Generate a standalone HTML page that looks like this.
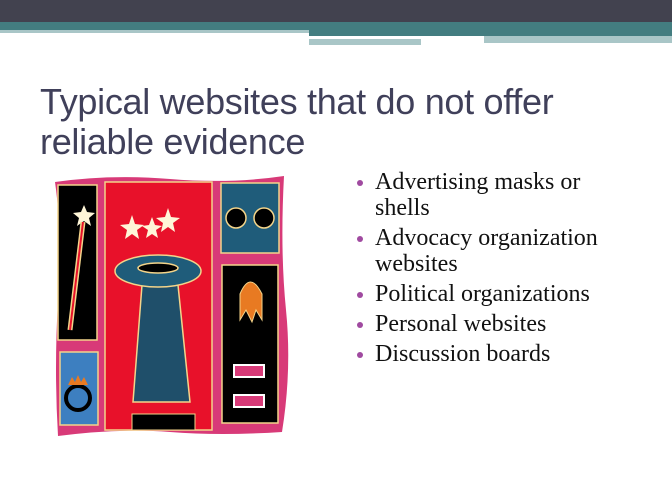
<!DOCTYPE html>
<html><head><meta charset="utf-8"><style>
body{margin:0;width:672px;height:504px;overflow:hidden;background:#fff;position:relative;font-family:"Liberation Sans",sans-serif}
.a{position:absolute}
h1{position:absolute;left:40px;top:82px;margin:0;font-weight:normal;font-size:36px;line-height:40px;color:#40405a;letter-spacing:-0.3px;white-space:nowrap}
ul{position:absolute;left:352px;top:169px;margin:0;padding:0;list-style:none;font-family:"Liberation Serif",serif;font-size:24px;line-height:26px;color:#111;width:252px}
li{position:relative;padding-left:23px;margin-bottom:4px}
li:before{content:"";position:absolute;left:5px;top:11px;width:6px;height:6px;border-radius:50%;background:#a04aa0}
</style></head><body>
<div class="a" style="left:0;top:0;width:672px;height:22px;background:#42424f"></div>
<div class="a" style="left:0;top:22px;width:672px;height:11px;background:#437d80"></div>
<div class="a" style="left:0;top:30px;width:309px;height:3px;background:#a9c6c7"></div>
<div class="a" style="left:309px;top:33px;width:363px;height:3px;background:#437d80"></div>
<div class="a" style="left:309px;top:36px;width:175px;height:2px;background:#fff"></div>
<div class="a" style="left:484px;top:36px;width:188px;height:7px;background:#a9c6c7"></div>
<div class="a" style="left:309px;top:39px;width:112px;height:6px;background:#a9c6c7"></div>
<h1>Typical websites that do not offer<br>reliable evidence</h1>
<svg class="a" style="left:50px;top:170px" width="240" height="270" viewBox="0 0 240 270">
<path d="M5 12 Q60 4 120 9 T234 6 Q230 80 236 140 T232 262 Q170 266 120 262 T8 266 Q4 200 8 130 T5 12Z" fill="#d83a78"/>
<g stroke="#f3d48a" stroke-width="1.5">
<rect x="8" y="15" width="39" height="155" fill="#000"/>
<rect x="55" y="12" width="107" height="248" fill="#e8112a"/>
<rect x="171" y="13" width="58" height="70" fill="#1f5c7a"/>
<rect x="172" y="95" width="56" height="158" fill="#000"/>
<rect x="10" y="182" width="38" height="73" fill="#3d7fc0"/>
</g>
<polygon points="34,35 37,42 45,43 39,48 41,56 34,51 27,56 29,48 23,43 31,42" fill="#fff6d8"/>
<line x1="33" y1="52" x2="20" y2="160" stroke="#f3d48a" stroke-width="5"/>
<line x1="33" y1="52" x2="20" y2="160" stroke="#e8112a" stroke-width="2"/>
<g fill="#fff6d8"><polygon points="82,45 85,54 94,55 87,60 89,69 82,64 75,69 77,60 70,55 79,54"/><polygon points="102,47 105,55 112,56 106,60 108,68 102,64 96,68 98,60 92,56 99,55"/><polygon points="118,38 121,47 130,48 123,53 125,62 118,57 111,62 113,53 106,48 115,47"/></g>
<path d="M92 115 L83 232 L140 232 L128 115Z" fill="#1f4f6a" stroke="#f3d48a" stroke-width="1.5"/>
<ellipse cx="108" cy="101" rx="43" ry="16" fill="#1f5c7a" stroke="#f3d48a" stroke-width="1.5"/>
<ellipse cx="108" cy="98" rx="20" ry="5" fill="#000" stroke="#f3d48a" stroke-width="1.5"/>
<rect x="82" y="244" width="63" height="16" fill="#000" stroke="#f3d48a"/>
<g fill="#000" stroke="#f3d48a" stroke-width="1.5"><circle cx="186" cy="48" r="10"/><circle cx="214" cy="48" r="10"/></g>
<path d="M190 124 Q200 100 212 124 L212 150 L206 140 L202 152 L196 140 L190 150Z" fill="#e87a22" stroke="#f3d48a"/>
<path d="M184 195 h30 v12 h-30z M184 225 h30 v12 h-30z" fill="#d83a78" stroke="#fff" stroke-width="2"/>
<circle cx="28" cy="228" r="12" fill="none" stroke="#000" stroke-width="4"/>
<path d="M18 215 l4-8 3 5 3-7 3 7 3-5 4 8z" fill="#e87a22"/>
</svg>
<ul>
<li>Advertising masks or shells</li>
<li>Advocacy organization websites</li>
<li>Political organizations</li>
<li>Personal websites</li>
<li>Discussion boards</li>
</ul>
</body></html>
